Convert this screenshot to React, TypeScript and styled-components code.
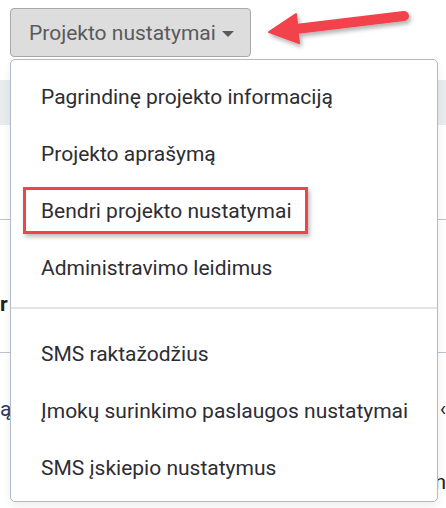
import React from "react";
import styled, { createGlobalStyle } from "styled-components";

const GlobalStyle = createGlobalStyle`
    html, body {
        margin: 0;
        padding: 0;
        background: #ffffff;
        overflow: hidden;
    }
    body {
        font-family: Roboto, "Noto Sans", "Liberation Sans", sans-serif;
    }
`;

type Item = { label: string; highlighted?: boolean };

const menuGroups: Item[][] = [
    [
        { label: "Pagrindinę projekto informaciją" },
        { label: "Projekto aprašymą" },
        { label: "Bendri projekto nustatymai", highlighted: true },
        { label: "Administravimo leidimus" },
    ],
    [
        { label: "SMS raktažodžius" },
        { label: "Įmokų surinkimo paslaugos nustatymai" },
        { label: "SMS įskiepio nustatymus" },
    ],
];

const App = () => {
    return <Page>
        <GlobalStyle />
        <Toolbar>
            <ToggleButton>
                Projekto nustatymai
                <Caret />
            </ToggleButton>
        </Toolbar>

        <Table>
            <HeaderRow />
            <Row height={95} />
            <Row height={133} offset={72}>
                <Cell bold>r</Cell>
            </Row>
            <Row height={160} offset={44} last>
                <Cell color="#2a3a66">ą<Dot /></Cell>
                <RightCell>
                    <span>‹</span>
                    <span>n</span>
                </RightCell>
            </Row>
        </Table>

        <Menu>
            {menuGroups.map((group, gi) => (
                <React.Fragment key={gi}>
                    {gi > 0 && <Divider />}
                    {group.map((item) => (
                        <MenuItem key={item.label}>
                            <Label highlighted={item.highlighted}>{item.label}</Label>
                        </MenuItem>
                    ))}
                </React.Fragment>
            ))}
        </Menu>

        <Arrow width="150" height="50" viewBox="0 0 150 50">
            <defs>
                <filter id="arrowShadow" x="-20%" y="-40%" width="140%" height="180%">
                    <feDropShadow dx="2" dy="3" stdDeviation="2" floodColor="#000" floodOpacity="0.3" />
                </filter>
            </defs>
            <g filter="url(#arrowShadow)" fill="#f2434b" stroke="#f2434b">
                <line x1="30" y1="29" x2="138" y2="16" strokeWidth="10" strokeLinecap="round" />
                <polygon points="3,32 30,14 33,43" strokeWidth="2" strokeLinejoin="round" />
            </g>
        </Arrow>
    </Page>
}

const Page = styled.div`
    position: relative;
    width: 446px;
    height: 508px;
    overflow: hidden;
    background: #ffffff;
`

const Toolbar = styled.div`
    display: flex;
    padding: 8px 10px 0;
    height: 72px;
    box-sizing: border-box;
`

const ToggleButton = styled.button`
    display: flex;
    align-items: center;
    gap: 6px;
    height: 49px;
    width: 241px;
    padding: 0 0 0 18px;
    box-sizing: border-box;

    background: #dddddd;
    border: 1px solid #a9a9a9;
    border-radius: 4px;

    font-family: Roboto, "Noto Sans", "Liberation Sans", sans-serif;
    font-size: 21px;
    color: #5a5a5a;
    white-space: nowrap;
`

const Caret = styled.span`
    display: inline-block;
    width: 0;
    height: 0;
    margin-top: 2px;
    border-left: 6px solid transparent;
    border-right: 6px solid transparent;
    border-top: 6px solid #5a5a5a;
`

const Table = styled.div`
    display: flex;
    flex-direction: column;
    padding-top: 8px;
`

const HeaderRow = styled.div`
    height: 45px;
    background: #e9ecef;
`

const Row = styled.div<{ height: number; offset?: number; last?: boolean }>`
    display: flex;
    justify-content: space-between;
    align-items: flex-start;
    height: ${(p) => p.height}px;
    box-sizing: border-box;
    padding-top: ${(p) => p.offset || 0}px;
    border-bottom: ${(p) => (p.last ? "none" : "1px solid #b9c4cf")};

    font-size: 21px;
    line-height: 24px;
    color: #222;
`

const Cell = styled.span<{ bold?: boolean; color?: string }>`
    font-weight: ${(p) => (p.bold ? 700 : 400)};
    color: ${(p) => p.color || "#222"};
    white-space: nowrap;
`

const RightCell = styled.span`
    display: flex;
    flex-direction: column;
    align-items: flex-end;
    gap: 49px;
`

const Dot = styled.span`
    display: inline-block;
    width: 2px;
    height: 2px;
    margin-left: 2px;
    background: #e8a040;
`

const Menu = styled.ul`
    position: absolute;
    top: 59px;
    left: 10px;
    width: 428px;
    height: 443px;
    box-sizing: border-box;
    margin: 0;
    padding: 8px 0 5px;
    list-style: none;

    background: #ffffff;
    border: 1px solid #b1bbc5;
    border-radius: 5px;
    box-shadow: 0 4px 10px rgba(0, 0, 0, 0.07);
`

const MenuItem = styled.li`
    display: flex;
    align-items: center;
    height: 57px;
    padding: 0 30px;
    white-space: nowrap;

    font-size: 21px;
    color: #2d2d33;
`

const Label = styled.span<{ highlighted?: boolean }>`
    ${(p) =>
        p.highlighted &&
        `
        display: flex;
        align-items: center;
        height: 47px;
        box-sizing: border-box;
        margin-left: -18px;
        padding: 0 14px 0 15px;
        border: 3px solid #f0434a;
        box-shadow: 2px 3px 4px rgba(0, 0, 0, 0.25);
    `}
`

const Divider = styled.li`
    height: 2px;
    margin: 11px 0 16px;
    background: #e3e3e3;
`

const Arrow = styled.svg`
    position: absolute;
    top: 0;
    left: 266px;
    overflow: visible;
`

export default App;
